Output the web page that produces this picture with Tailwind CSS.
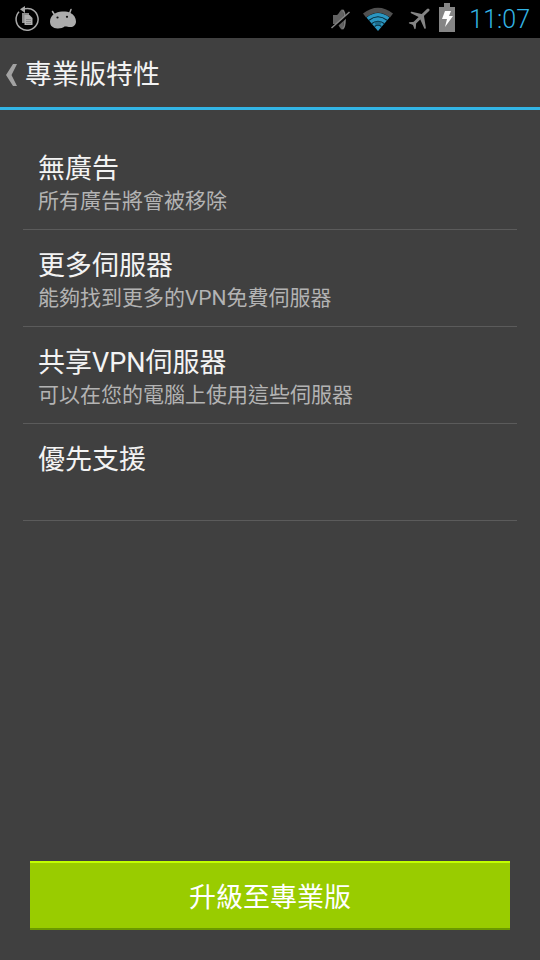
<!DOCTYPE html>
<html lang="zh-Hant">
<head>
<meta charset="utf-8">
<meta name="viewport" content="width=device-width, initial-scale=1">
<title>專業版特性</title>
<script src="https://cdn.jsdelivr.net/npm/@tailwindcss/browser@4"></script>
</head>
<body class="flex min-h-screen flex-col bg-[#404040] font-['Roboto','Noto_Sans_CJK_TC',sans-serif] text-[#f3f3f3]">
  <div class="flex h-[38px] shrink-0 items-center justify-between bg-black pr-[10px] pl-[14px]">
    <div class="flex items-center gap-2">
      <svg class="size-[26px]" viewBox="0 0 26 26" fill="none" aria-hidden="true">
        <path d="M17 3A11 11 0 1 1 5 5.800" stroke="#a8a8a8" stroke-width="1.500"/>
        <path d="M11 0v7L6 3.200z" fill="#a8a8a8"/>
        <path d="M10 2.900q4-.8 7 .1" stroke="#a8a8a8" stroke-width="1.400"/>
        <path d="M8 7h7v2h-4v8H8z" fill="#8c8c8c"/>
        <path d="M10.500 9h5l3 3v7h-8z" fill="#b0b0b0"/>
        <path d="M12 13.500h5M12 15.500h5M12 17.500h5" stroke="#777" stroke-width=".7"/>
      </svg>
      <svg class="h-[22px] w-[29px]" viewBox="0 0 29 22" aria-hidden="true">
        <path d="M4.500 3.500l2.500 4M23 1.500l-1.500 4" stroke="#acacac" stroke-width="1.500" stroke-linecap="round"/>
        <path d="M5.500 6.500C8 4.500 11 3.600 14 3.500c3.500-.1 6.500.3 8.500 1.500 3.500 1.800 5.500 5 5.500 8.500 0 3.500-2.500 5.500-5.500 5.500-2 0-4-.2-5.500-.8-2 1.500-4.500 2.300-7.500 2.200C5 20.300 2 18 2 13.500c0-3 1.500-5.500 3.500-7z" fill="#acacac"/>
        <circle cx="9.500" cy="9.500" r="1.100" fill="#111"/><circle cx="19" cy="8.800" r="1.100" fill="#111"/>
      </svg>
    </div>
    <div class="flex items-center">
      <svg class="mr-[11px] h-[24px] w-[20px]" viewBox="0 0 20 24" fill="none" aria-hidden="true">
        <path d="M2 8h4c2-1 3-5 5-5.500 1.500 0 2 4 2 9.500s-.5 10-2 10.500c-2-.5-3-4.500-5-5.500H2z" fill="#626262"/>
        <path d="M11.500 3c3.300 2 3.300 17 0 19" stroke="#7c7c7c" stroke-width="1.700"/>
        <path d="M1 22.500L19 6.500" stroke="#000" stroke-width="2.500"/>
        <path d="M.5 21L18.500 5" stroke="#858585" stroke-width="1.500"/>
      </svg>
      <svg class="mr-[14px] h-[24px] w-[32px]" viewBox="0 0 32 24" fill="none" aria-hidden="true">
        <path d="M1 6.500Q16-5 31 6.500l-3 4Q16 1 4 10.500z" fill="#505050"/>
        <path d="M4.500 10.500Q16 1.500 27.500 10.500L16 24z" fill="#2b96c1"/>
        <path d="M7 13.200q9-7 18 0M9.500 16.700q6.500-5 13 0M12.500 19.500q3.500-2.500 7 0" stroke="#062b3b" stroke-width="1.100"/>
        <path d="M12 14.500h8l-2 4h-4z" fill="#17566f" opacity=".65"/>
      </svg>
      <svg class="mr-[9px] size-[22px]" viewBox="0 0 22 22" fill="none" stroke="#858585" stroke-linecap="round" stroke-linejoin="round" aria-hidden="true">
        <path d="M20 2L6 15.500" stroke-width="3"/>
        <path d="M14.500 7L3.500 4.500l9 4.500M15 7.500L17 20l-4.500-10" stroke-width="1.700" fill="#858585"/>
        <path d="M7 14.500l-5.500.5 4 1.500L7 20.500l.5-5" stroke-width="1.300" fill="#858585"/>
      </svg>
      <svg class="mr-[14px] mb-[3px] h-[29px] w-[16px]" viewBox="0 0 16 29" aria-hidden="true">
        <path d="M5 0h6v4h5v25H0V4h5z" fill="#858585"/>
        <path d="M6 8h6l-2 5h4L6 24l2-8H3z" fill="#fff"/>
      </svg>
      <time class="pt-[2px] font-['Roboto',sans-serif] text-[25px] leading-8 font-light text-[#33b5e5]">11:07</time>
    </div>
  </div>

  <header class="flex h-[72px] shrink-0 items-center border-b-3 border-[#33b5e5] px-[6px] pt-1">
    <a href="#" class="flex items-center gap-2" aria-label="返回 專業版特性">
      <svg class="h-[22px] w-[11px]" viewBox="0 0 11 22" aria-hidden="true">
        <path d="M7 0h4L5.500 11 11 22H7L0 11z" fill="#a2a2a2"/>
      </svg>
      <h1 class="text-[27px] leading-8">專業版特性</h1>
    </a>
  </header>

  <main class="flex grow flex-col pt-[23px]">
    <ul class="mx-[23px]">
      <li class="min-h-[97px] border-b border-[#5b5b5b] px-[15px] pt-5">
        <h2 class="text-[27px] leading-8">無廣告</h2>
        <p class="text-[21px] leading-8 text-[#b3b3b3]">所有廣告將會被移除</p>
      </li>
      <li class="min-h-[97px] border-b border-[#5b5b5b] px-[15px] pt-5">
        <h2 class="text-[27px] leading-8">更多伺服器</h2>
        <p class="text-[21px] leading-8 text-[#b3b3b3]">能夠找到更多的VPN免費伺服器</p>
      </li>
      <li class="min-h-[97px] border-b border-[#5b5b5b] px-[15px] pt-5">
        <h2 class="text-[27px] leading-8">共享VPN伺服器</h2>
        <p class="text-[21px] leading-8 text-[#b3b3b3]">可以在您的電腦上使用這些伺服器</p>
      </li>
      <li class="min-h-[97px] border-b border-[#5b5b5b] px-[15px] pt-5">
        <h2 class="text-[27px] leading-8">優先支援</h2>
      </li>
    </ul>
    <div class="mt-auto px-[30px] pt-6 pb-[30px]">
      <button type="button" class="h-[69px] w-full border-t-2 border-b-2 border-t-[#c3ff00] border-b-[#6b9900] bg-[#99cc00] pt-1 text-[27px] leading-8 text-white">升級至專業版</button>
    </div>
  </main>
</body>
</html>
